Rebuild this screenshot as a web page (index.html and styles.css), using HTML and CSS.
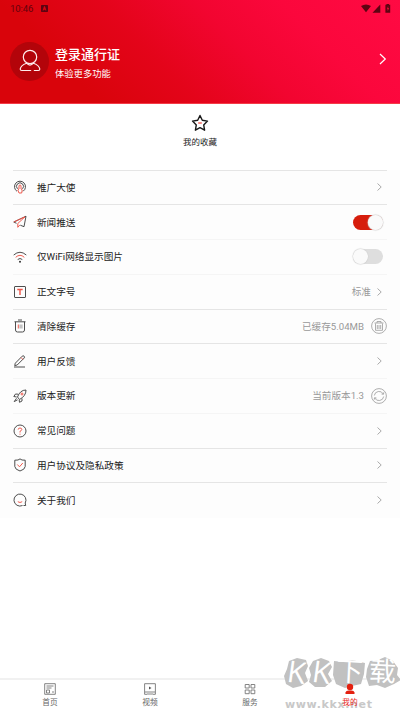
FILE: index.html
```html
<!DOCTYPE html>
<html lang="zh-CN">
<head>
<meta charset="utf-8">
<title>我的</title>
<link rel="stylesheet" href="styles.css">
</head>
<body>
<div class="app">
  <header class="header">
    <div class="status">
      <span class="time">10:46</span>
      <svg class="status-app" width="7" height="7" viewBox="0 0 7 7"><path fill-rule="evenodd" d="M.8 0h5.4q.8 0 .8.8v5.4q0 .8-.8.8H.8Q0 7 0 6.200V.8Q0 0 .8 0ZM3 1.300 1.600 5.500h.9l.3-.8h1.400l.3.8h.9L4 1.300Z"/></svg>
      <svg class="status-icons" width="30" height="10" viewBox="0 0 30 10"><path d="M0 2Q5 -1 10 2L5 8.300ZM19.300.5V8.700H11.500ZM25.500.8V0h2.500v.8h1.200V8.700h-4.800V.8Z"/><path class="bolt" d="M27.200 2 25.700 5.200h1v2l1.500-3.200h-1Z"/></svg>
    </div>
    <div class="profile">
      <div class="avatar"><svg width="22" height="24" viewBox="0 0 22 24"><circle cx="11" cy="8" r="6.700"/><path d="M7.500 14.200C4 15.500 1.500 18 1.200 20q0 1.500 1.500 1.500h9M14.500 14.200c3.500 1.300 6 3.800 6.300 5.800q0 1.500-1.500 1.500h-4M7.500 14.200Q11 18 14.500 14.200"/></svg></div>
      <div class="who"><h1>登录通行证</h1><p>体验更多功能</p></div>
      <svg class="go" width="8" height="12" viewBox="0 0 8 12"><path d="M1 1l5.300 5L1 11"/></svg>
    </div>
  </header>
  <section class="favorite">
    <svg width="18" height="18" viewBox="0 0 18 18"><path class="star" d="M9 1.500l2.300 4.800 5.200.8-3.800 3.800.9 5.300L9 13.700l-4.600 2.500.9-5.300L1.500 7.100l5.200-.8Z"/><path class="r" d="M7.200 9h3.600"/></svg>
    <span>我的收藏</span>
  </section>
  <main class="list">
    <div class="row line"><svg class="icon" viewBox="0 0 14 14"><path d="M4 11.300A5.500 5.500 0 1 1 10 11.300M4.500 8.800a3.500 3.500 0 1 1 5 0"/><path class="r" d="M6 9V6a1 1 0 0 1 2 0v3l1.200.8-.5 3.200H6L4.800 10Z"/></svg><span>推广大使</span><svg class="arrow" viewBox="0 0 5 8"><path d="M.5.5 4.200 4 .5 7.500"/></svg></div>
    <div class="row line"><svg class="icon" viewBox="0 0 14 14"><path d="M3.500 8.300.8 7 13 1.200 11 11.700 7.300 10.200"/><path class="r" d="M.8 7 12 1.800 4.800 8.500v3.800l2-2.300"/></svg><span>新闻推送</span><i class="switch on"></i></div>
    <div class="row faint"><svg class="icon" viewBox="0 0 14 14"><path d="M.7 5Q7-.5 13.300 5"/><path class="r" d="M2.700 7.300q4.300-4 8.600 0"/><path d="M4.700 9.500q2.300-2 4.600 0"/><circle class="dot" cx="7" cy="11.700" r="1"/></svg><span>仅WiFi网络显示图片</span><i class="switch"></i></div>
    <div class="row faint"><svg class="icon" viewBox="0 0 14 14"><rect x="1.500" y="1.500" width="11" height="11" rx=".5"/><path class="r t" d="M4.300 4.500h5.400M7 4.500V10"/></svg><span>正文字号</span><em>标准</em><svg class="arrow" viewBox="0 0 5 8"><path d="M.5.5 4.200 4 .5 7.500"/></svg></div>
    <div class="row line"><svg class="icon" viewBox="0 0 14 14"><path d="M1.500 2.800h11M5 1h4M2.500 2.800V11q0 2 2 2h5q2 0 2-2V2.800"/><path class="r" d="M5.300 5.500v4"/><path class="soft" d="M7.100 5.500v4M8.900 5.500v4"/></svg><span>清除缓存</span><em>已缓存5.04MB</em><svg class="round" viewBox="0 0 16 16"><circle cx="8" cy="8" r="7.400"/><path d="M3.500 5h9M6 5V3.500h4V5M4.500 5.500v6.800h7V5.500M6.300 7v4M8 7v4M9.700 7v4"/></svg></div>
    <div class="row line"><svg class="icon" viewBox="0 0 14 14"><path d="M2.300 9.200 9.200 2.200q1-.9 1.900 0 .9.900 0 1.900L4.200 11l-2.500.6ZM1 13h11"/><path class="r" d="M8 3.500 10 5.500"/></svg><span>用户反馈</span><svg class="arrow" viewBox="0 0 5 8"><path d="M.5.5 4.200 4 .5 7.500"/></svg></div>
    <div class="row faint"><svg class="icon" viewBox="0 0 14 14"><path d="M4.500 8Q7 1 13 1 13 7 6.500 10.500ZM5 5.200 2.500 5 .8 7.500 3.700 8M9 9.500V12l-2.500 1.300-.3-2.500M3.500 9.300 1.200 12.600 4.600 10.800"/><circle class="r" cx="9" cy="5" r="1"/></svg><span>版本更新</span><em>当前版本1.3</em><svg class="round" viewBox="0 0 16 16"><circle cx="8" cy="8" r="7.400"/><path d="M3.300 7.500a4.800 4.800 0 0 1 9-1.500M12.700 8.500a4.800 4.800 0 0 1-9 1.500M10.500 6l2 .3.300-2M5.500 10l-2-.3-.3 2"/></svg></div>
    <div class="row faint"><svg class="icon" viewBox="0 0 14 14"><circle cx="7" cy="7" r="6"/><path class="r" d="M5.200 5.600Q5.200 4 7 4t1.800 1.500Q8.800 6.500 7 7.300v1.200M7 9.700v1"/></svg><span>常见问题</span><svg class="arrow" viewBox="0 0 5 8"><path d="M.5.5 4.200 4 .5 7.500"/></svg></div>
    <div class="row line"><svg class="icon" viewBox="0 0 14 14"><path d="M7 .9 9 2l3.200.2V8.500Q12 11.500 7 13 2 11.500 1.800 8.500V2.200L5 2Z"/><path class="r" d="M4.300 6.500l2.200 2.300L9.800 5"/></svg><span>用户协议及隐私政策</span><svg class="arrow" viewBox="0 0 5 8"><path d="M.5.5 4.200 4 .5 7.500"/></svg></div>
    <div class="row line"><svg class="icon" viewBox="0 0 14 14"><path d="M9.500 12.500A6 6 0 1 1 12.200 10L12.700 12.500H10.500"/><path class="r" d="M4.800 8.700q2.200 1.600 4.400 0"/></svg><span>关于我们</span><svg class="arrow" viewBox="0 0 5 8"><path d="M.5.5 4.200 4 .5 7.500"/></svg></div>
  </main>
  <nav class="tabs">
    <a><svg viewBox="0 0 12 12"><path d="M.7.700h10.600v10.600H.7ZM2.500 3h7M2.500 5h5M8 9h2M2.500 7h3v3h-3Z"/></svg><span>首页</span></a>
    <a><svg viewBox="0 0 12 12"><path d="M3 11.300H.6V.7h10.800v10.600H9M1 9h10M3 11h6"/><path class="play" d="M5 3.500 7.500 5 5 6.500Z"/></svg><span>视频</span></a>
    <a><svg viewBox="0 0 12 12"><path d="M1.200 1.500h4V5h-4ZM7 1.500h3.800V5H7ZM1.200 7h4v3.700h-4ZM7 7h3.800v3.700H7Z"/></svg><span>服务</span></a>
    <a class="active"><svg viewBox="0 0 12 12"><circle cx="6" cy="4" r="3.200"/><path d="M1.500 11V9.500Q2 7.500 4.500 7.500h3Q10 7.500 10.500 9.500V11Z"/></svg><span>我的</span></a>
  </nav>
  <div class="watermark">
    <svg width="118" height="34" viewBox="0 0 118 34"><path class="stone" d="M5 4 13 1 22 3 24 9 21 16 24 24 17 29 9 31 2 27 0 19 3 12ZM29 4 37 1 45 4 48 10 44 17 48 24 41 30 31 30 25 25 27 18 25 11ZM50 4 60 5 68 3 81 6 80 17 77 27 68 29 61 31 52 27 49 18ZM86 4 94 3 101 0 109 4 114 11 113 18 117 23 110 27 101 31 93 28 85 29 82 20 83 12Z"/></svg>
    <div class="brand"><span class="k">K</span><span class="k">K</span><span>下</span><span>载</span></div>
    <div class="site">www.kkx.net</div>
  </div>
</div>
</body>
</html>
```

FILE: styles.css
```css
* { box-sizing: border-box; }
body { margin: 0; background: #fff; font-family: Roboto, "Noto Sans CJK SC", sans-serif; color: #222; }
.app { position: relative; width: 400px; height: 710px; display: flex; flex-direction: column; overflow: hidden; }
svg { display: block; flex: none; fill: none; }

.header { height: 104px; flex: none; background: linear-gradient(45deg, #d9040b 20%, #e4041a 40%, #f20530 59%, #fb073c 76%, #ff0a43); border-bottom: 1px solid #f43b47; }
.status { height: 17px; display: flex; align-items: center; padding: 0 9px 0 10px; font-size: 9.5px; line-height: 17px; color: #65020d; }
.status svg { fill: #5c0412; }
.time { letter-spacing: -.1px; }
.status-app { margin-left: 8px; }
.status-icons { margin-left: auto; }
.status .bolt { fill: #e00b35; }
.profile { display: flex; align-items: center; height: 88px; padding: 0 13px 0 10px; }
.avatar { width: 39px; height: 39px; border-radius: 50%; background: #b3040a; display: flex; align-items: center; justify-content: center; }
.avatar svg { stroke: #ffeded; stroke-width: 1.2; stroke-linecap: round; stroke-linejoin: round; }
.who { margin-left: 6px; padding-top: 5px; color: #fff; }
.who h1 { margin: 0; font-size: 13px; line-height: 18px; font-weight: 500; }
.who p { margin: 2px 0 0; font-size: 9.3px; line-height: 16px; }
.go { margin: -5px 0 0 auto; stroke: #fff; stroke-width: 1.2; }

.favorite { height: 65.500px; flex: none; display: flex; flex-direction: column; align-items: center; padding-top: 9.500px; font-size: 8.5px; line-height: 12px; }
.favorite span { margin-top: 4.500px; }
.star { stroke: #181818; stroke-width: 1.4; stroke-linejoin: round; }
.favorite .r { stroke: #ef4037; stroke-width: 1.2; }

.list { background: #fdfdfd; padding: 0 13px; flex: none; height: 348.500px; display: grid; grid-template-rows: repeat(10, 34.75px); }
.row { display: flex; align-items: center; border-top: 1px solid #e5e5e5; font-size: 9.65px; line-height: 14px; padding-right: 5px; }
.row.faint { border-top-color: #f5f5f5; }
.row > span, .row em { padding-top: 1px; }
.icon { width: 14px; height: 14px; margin-right: 10px; stroke: #444; stroke-width: .95; }
.icon .r { stroke: #ef5347; }
.icon .t { stroke-width: 1.4; }
.icon .soft { stroke: #999; }
.icon .dot { fill: #333; stroke: none; }
.arrow { width: 5px; height: 8px; margin-left: auto; stroke: #a0a0a0; stroke-width: .9; }
.row em { margin-left: auto; font-style: normal; color: #999; }
em + .arrow { margin-left: 6px; }
.round { width: 16px; height: 16px; margin: 0 -5px 0 7px; stroke: #999; stroke-width: .8; }
.switch { width: 30px; height: 15px; margin: 0 -1px 0 auto; border-radius: 8px; background: #dedede; display: flex; align-items: center; }
.switch::before { content: ""; width: 15px; height: 15px; border-radius: 50%; background: #fafafa; box-shadow: 0 0 1px .5px #d2d2d2; }
.switch.on { background: #d61d0c; justify-content: flex-end; }

.tabs { margin-top: auto; height: 32px; flex: none; display: grid; grid-template-columns: repeat(4, 1fr); border-top: 2px solid #f1f1f1; }
.tabs a { display: flex; flex-direction: column; align-items: center; padding-top: 3px; font-size: 7.7px; line-height: 11px; color: #666; }
.tabs svg { width: 12px; height: 12px; stroke: #777; stroke-width: .9; }
.tabs span { margin-top: 2px; }
.tabs .play { fill: #555; stroke: none; }
.tabs .active { color: #e9231a; position: relative; z-index: 2; }
.tabs .active svg { fill: #e42010; stroke: none; }

/* Site mark laid over the lower right corner */
.watermark { position: absolute; left: 284px; top: 657px; width: 116px; height: 53px; }
.stone { fill: #c1c1c1; }
.brand { position: absolute; left: 0; top: 0; display: grid; grid-template-columns: 25px 25px 31px 35px; height: 31px; text-align: center; font-size: 27px; line-height: 30px; font-weight: 400; color: #fff; }
.brand span { transform: rotate(3deg); }
.brand .k { font-family: "Open Sans", sans-serif; font-size: 30px; transform: rotate(8deg); }
.site { position: absolute; left: 1px; top: 41px; font: bold 11px/13px "DejaVu Sans", sans-serif; color: #c8c8c8; letter-spacing: .65px; white-space: nowrap; }
```
